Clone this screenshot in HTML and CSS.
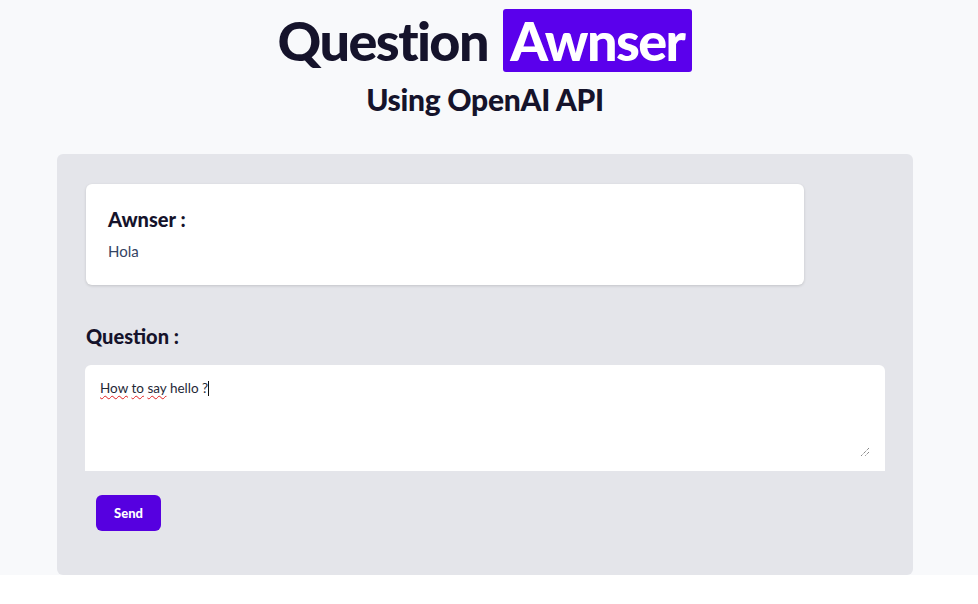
FILE: index.html
```html
<!DOCTYPE html>
<html>
<head>
<meta charset="utf-8">
<link rel="stylesheet" href="styles.css">
</head>
<body>
<div class="page">
  <header class="header">
    <h1 class="title">Question <span class="highlight">Awnser</span></h1>
    <h2 class="subtitle">Using OpenAI API</h2>
  </header>
  <main class="panel">
    <section class="answer-card">
      <h3 class="card-title">Awnser :</h3>
      <p class="answer-text">Hola</p>
    </section>
    <h3 class="question-label">Question :</h3>
    <div class="textarea-box">
      <span class="ta-text"><span class="sp">How</span> <span class="sp">to</span> <span class="sp">say</span> hello ?</span><span class="caret"></span>
      <svg class="grip" width="10" height="10" viewBox="0 0 10 10"><path d="M9 1 L1 9 M9 5 L5 9" stroke="#555" stroke-width="1" stroke-dasharray="1 1"/></svg>
    </div>
    <div class="actions">
      <button class="send">Send</button>
    </div>
  </main>
</div>
</body>
</html>
```
FILE: styles.css
```css
* { box-sizing: border-box; }
html, body { margin: 0; padding: 0; background: #ffffff; }
body { font-family: "Lato", "Noto Sans", sans-serif; color: #16142b; }
.page {
  width: 100%;
  padding-right: 8px;
  background: #f8f9fb;
  display: flex;
  flex-direction: column;
  align-items: center;
}
.header { display: flex; flex-direction: column; align-items: center; padding-top: 9px; }
.title {
  margin: 0;
  font-size: 54px;
  font-weight: 900;
  line-height: 63px;
  letter-spacing: -1.6px;
  color: #15132b;
}
.highlight {
  display: inline-block;
  background: #5a00ec;
  color: #fff;
  padding: 0 8px 0 7px;
  margin-left: 4px;
  border-radius: 3px;
}
.subtitle {
  margin: 9px 0 0;
  font-size: 30px;
  font-weight: 900;
  line-height: 36px;
  letter-spacing: -0.3px;
  color: #15132b;
}
.panel {
  margin-top: 37px;
  width: 856px;
  background: #e4e5ea;
  border-radius: 6px;
  padding: 30px 28px 44px;
}
.answer-card {
  width: 718px;
  margin-left: 1px;
  background: #fff;
  border-radius: 6px;
  box-shadow: 0 1px 3px rgba(0,0,0,0.15);
  padding: 22px 22px 25px;
}
.card-title {
  margin: 0;
  font-size: 20px;
  font-weight: 900;
  line-height: 26px;
  color: #15132b;
}
.answer-text {
  margin: 10px 0 0;
  font-size: 15px;
  color: #344463;
  line-height: 18px;
}
.question-label {
  margin: 38px 0 0 1px;
  font-size: 20px;
  font-weight: 900;
  line-height: 26px;
  color: #15132b;
}
.textarea-box {
  position: relative;
  margin-top: 16px;
  height: 106px;
  background: #fff;
  border-radius: 6px 6px 0 0;
  padding: 15px 15px;
  font-size: 13.5px;
  color: #1f2937;
}
.sp {
  text-decoration: underline wavy #e02020;
  text-decoration-thickness: 1px;
  text-underline-offset: 2px;
}
.caret {
  display: inline-block;
  width: 1px;
  height: 15px;
  background: #111;
  vertical-align: -3px;
}
.grip { position: absolute; right: 15px; bottom: 14px; }
.actions { padding: 24px 0 0 11px; }
.send {
  background: #5600e0;
  color: #fff;
  border: 0;
  border-radius: 6px;
  width: 65px;
  height: 36px;
  font-family: inherit;
  font-size: 13px;
  font-weight: 900;
}
```
